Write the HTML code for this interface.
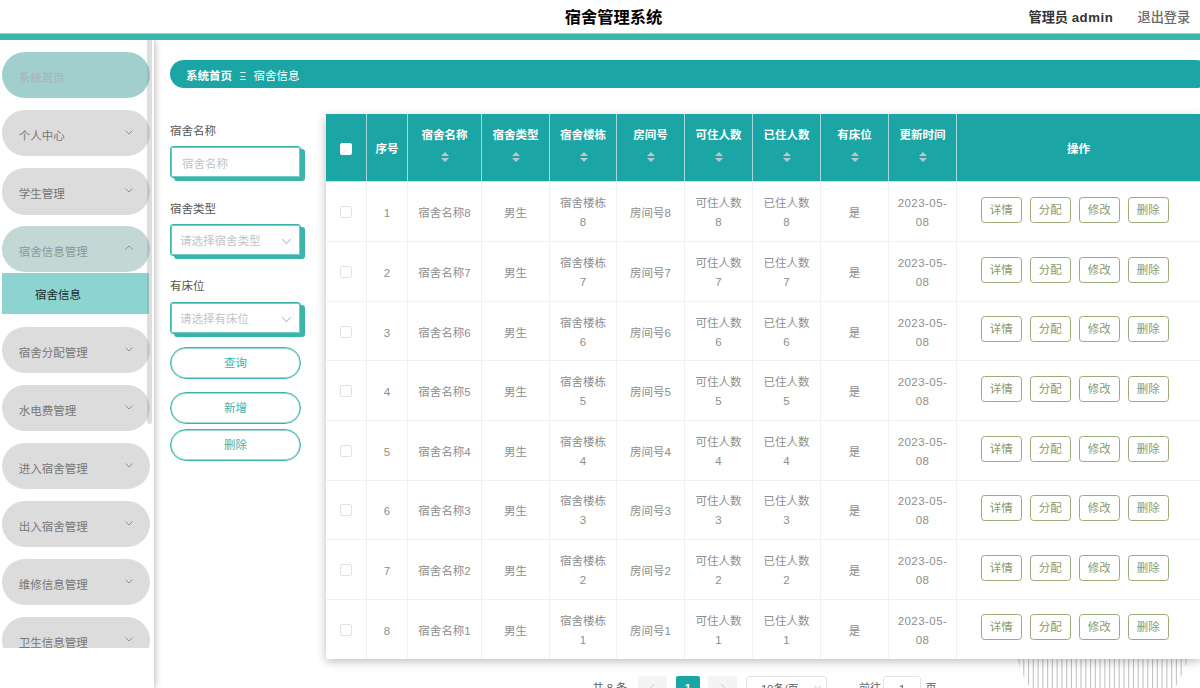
<!DOCTYPE html>
<html lang="zh-CN">
<head>
<meta charset="utf-8">
<title>宿舍管理系统</title>
<style>
*{box-sizing:border-box;margin:0;padding:0}
html,body{width:1200px;height:688px;overflow:hidden;background:#fff}
body{font-family:"Liberation Sans","Noto Sans CJK SC",sans-serif;font-size:12px;color:#606266;position:relative}
.abs{position:absolute}
/* header */
#hd{position:absolute;left:0;top:0;width:1200px;height:40px;background:#fff;border-bottom:6px solid #3bb4ac;z-index:30}
#hd:after{content:"";position:absolute;left:0;top:33px;width:1200px;height:1px;background:rgba(59,180,172,.55)}
#hd .title{position:absolute;left:0;width:1227px;top:0;height:34px;line-height:34px;text-align:center;font-size:16.3px;font-weight:bold;color:#000}
#hd .user{position:absolute;left:1028.5px;top:0;height:34px;line-height:35px;font-size:13.2px;font-weight:bold;color:#333;white-space:nowrap}
#hd .out{position:absolute;left:1137.5px;top:0;height:34px;line-height:35px;font-size:13.2px;color:#6a6a6a;font-weight:500;white-space:nowrap}
/* sidebar */
#sb{position:absolute;left:0;top:40px;width:154px;height:648px;background:#fff;box-shadow:1px 0 7px rgba(0,0,0,.28);z-index:20}
#sbwrap{position:absolute;left:0;top:0;width:154px;height:608px;overflow:hidden}
.mi{position:absolute;left:2px;width:147.7px;height:46.2px;border-radius:23.1px;background:#dcdcdc;color:#777;font-size:11.5px;line-height:53px;padding-left:16.7px;white-space:nowrap}
.mi svg{position:absolute;left:121.8px;top:16.8px;width:10px;height:10px}
.mi.home{background:#a0cfce;color:#b0b0b8;line-height:52px}
.mi.open{background:#c3d7d4;color:#8a9a98}
.sub{position:absolute;left:2.3px;top:233.4px;width:147px;height:40.3px;background:#8dd3cf;color:#1c2b2a;font-size:11.5px;line-height:44px;padding-left:32.8px}
#thumb{position:absolute;left:147px;top:0;width:5px;height:384px;border-radius:0 0 3px 3px;background:rgba(144,147,153,.3)}
/* main */
#bc{position:absolute;left:169.7px;top:60.2px;width:1040px;height:28.3px;border-radius:14.2px;background:#1ba6a5;color:#fff;font-size:11.5px;line-height:32px;padding-left:16.3px;white-space:pre}
#bc b{font-weight:bold}
#bc .sep{display:inline-block;width:21.6px;text-align:center;font-size:10px}
.lbl{position:absolute;left:170px;font-size:11.5px;color:#555;line-height:16px}
.inp{position:absolute;left:170px;width:131px;height:32px;border:1px solid #3bb4ac;border-radius:3px;background:#fff;box-shadow:inset 0 0 0 1px rgba(59,180,172,.7),4px 3px 0 #3bb4ac;color:#c0c4cc;font-size:11.5px;line-height:33px;padding-left:9px;white-space:nowrap}
.inp svg{position:absolute;left:110.2px;top:11.7px;width:11px;height:8.8px}
.btn{position:absolute;left:170px;width:131px;height:32px;border:1px solid #3bb4ac;box-shadow:inset 0 0 0 1px rgba(59,180,172,.5);border-radius:16px;background:#fff;color:#3bb4ac;font-size:11.5px;line-height:31px;text-align:center}

/* decorative striped circle */
#deco{position:absolute;left:1015px;top:551px;width:175px;height:175px;z-index:1}
/* table */
#tb{position:absolute;left:326px;top:114px;width:874px;height:545px;overflow:hidden;background:#fff;box-shadow:0 2.5px 9.5px rgba(0,0,0,.27);z-index:5}
.th-row{position:absolute;left:0;top:0;width:874px;height:67px;background:#1ba6a5}
.th-row:after{content:"";position:absolute;left:0;top:67px;width:874px;height:1px;background:rgba(27,166,165,.3)}
.th{position:absolute;top:0;height:67px;border-right:1px solid #a5d8da;color:#fff;font-weight:bold;font-size:11.5px;text-align:center}
.th:last-child{border-right:none}
.ht{position:absolute;left:0;right:0;top:12.2px;line-height:18px}
.ht.single{top:26px}
.caret{position:absolute;left:50%;top:38px;width:8px;height:10px;margin-left:-3.5px}
.caret i{position:absolute;left:0;width:0;height:0;border:4px solid transparent}
.caret .up{top:-4px;border-bottom-color:#c0c4cc}
.caret .dn{top:5.7px;border-top-color:#c0c4cc}
.ck{position:absolute;left:14px;top:50%;margin-top:-5px;width:12px;height:12px;border:1px solid #e0e2e9;border-radius:1.7px;background:#fff}
.hck{border-color:#fff;top:29px;margin-top:0}
.tr{position:absolute;left:0;width:874px;border-bottom:1px solid transparent}
.hl{position:absolute;left:0;width:874px;height:1px;background:#f0f1f3}
.td{position:absolute;top:0;height:100%;border-right:1px solid #f0f1f3;color:#8e8e8e;font-size:11.5px;text-align:center;display:flex;align-items:center;justify-content:center}
.td:last-child{border-right:none}
.ct{display:block;line-height:19.8px;position:relative;top:2.5px}
.ct.c2{line-height:19px;top:2.1px}
.ob{position:absolute;width:40.6px;height:26px;border:1px solid #9aab7c;border-radius:3.5px;color:#8b9a6c;font-size:11.5px;line-height:25px;text-align:center;background:#fff}
/* pager */
#pg{position:absolute;left:0;top:676px;width:1200px;height:24px;font-size:11.1px;color:#606266;z-index:6}
#pg span{position:absolute;top:0;height:24px;line-height:25.5px;text-align:center;white-space:nowrap}
#pg .pb{background:#f4f4f5;border-radius:2px;color:#c0c4cc}
#pg .cur{background:#1ba6a5;color:#fff;border-radius:2px;font-weight:bold}
#pg .box{border:1px solid #e1e3e9;border-radius:3px;background:#fff}
.dt{letter-spacing:.45px}
</style>
</head>
<body>
<div id="hd">
  <div class="title">宿舍管理系统</div>
  <div class="user">管理员 <span style="letter-spacing:.55px">admin</span></div>
  <div class="out">退出登录</div>
</div>

<div id="sb">
  <div id="sbwrap">
    <div class="mi home" style="top:12px">系统首页</div>
    <div class="mi" style="top:70.2px">个人中心<svg viewBox="0 0 10 10"><path d="M1.5 3.5 L5 7 L8.5 3.5" fill="none" stroke="#909399" stroke-width="1"/></svg></div>
    <div class="mi" style="top:128.4px">学生管理<svg viewBox="0 0 10 10"><path d="M1.5 3.5 L5 7 L8.5 3.5" fill="none" stroke="#909399" stroke-width="1"/></svg></div>
    <div class="mi open" style="top:186.3px">宿舍信息管理<svg viewBox="0 0 10 10"><path d="M1.5 6.5 L5 3 L8.5 6.5" fill="none" stroke="#909399" stroke-width="1"/></svg></div>
    <div class="sub">宿舍信息</div>
    <div class="mi" style="top:286.8px">宿舍分配管理<svg viewBox="0 0 10 10"><path d="M1.5 3.5 L5 7 L8.5 3.5" fill="none" stroke="#909399" stroke-width="1"/></svg></div>
    <div class="mi" style="top:344.9px">水电费管理<svg viewBox="0 0 10 10"><path d="M1.5 3.5 L5 7 L8.5 3.5" fill="none" stroke="#909399" stroke-width="1"/></svg></div>
    <div class="mi" style="top:403px">进入宿舍管理<svg viewBox="0 0 10 10"><path d="M1.5 3.5 L5 7 L8.5 3.5" fill="none" stroke="#909399" stroke-width="1"/></svg></div>
    <div class="mi" style="top:461.1px">出入宿舍管理<svg viewBox="0 0 10 10"><path d="M1.5 3.5 L5 7 L8.5 3.5" fill="none" stroke="#909399" stroke-width="1"/></svg></div>
    <div class="mi" style="top:519.2px">维修信息管理<svg viewBox="0 0 10 10"><path d="M1.5 3.5 L5 7 L8.5 3.5" fill="none" stroke="#909399" stroke-width="1"/></svg></div>
    <div class="mi" style="top:577.3px">卫生信息管理<svg viewBox="0 0 10 10"><path d="M1.5 3.5 L5 7 L8.5 3.5" fill="none" stroke="#909399" stroke-width="1"/></svg></div>
  </div>
  <div id="thumb"></div>
</div>

<div id="bc"><b>系统首页</b><span class="sep">Ξ</span>宿舍信息</div>

<div class="lbl" style="top:123px">宿舍名称</div>
<div class="inp" style="top:146px;padding-left:11px;line-height:34px">宿舍名称</div>
<div class="lbl" style="top:201px">宿舍类型</div>
<div class="inp" style="top:224px">请选择宿舍类型<svg viewBox="0 0 10 8"><path d="M1 2 L5 6 L9 2" fill="none" stroke="#c0c4cc" stroke-width="1"/></svg></div>
<div class="lbl" style="top:278px">有床位</div>
<div class="inp" style="top:302px">请选择有床位<svg viewBox="0 0 10 8"><path d="M1 2 L5 6 L9 2" fill="none" stroke="#c0c4cc" stroke-width="1"/></svg></div>
<div class="btn" style="top:347px">查询</div>
<div class="btn" style="top:392px">新增</div>
<div class="btn" style="top:428.5px">删除</div>

<!--TABLE-->
<div id="tb">
<div class="th-row">
<div class="th" style="left:0px;width:41px"><span class="ck hck"></span></div>
<div class="th" style="left:41px;width:41px"><span class="ht single">序号</span></div>
<div class="th" style="left:82px;width:74px"><span class="ht">宿舍名称</span><span class="caret"><i class="up"></i><i class="dn"></i></span></div>
<div class="th" style="left:156px;width:68px"><span class="ht">宿舍类型</span><span class="caret"><i class="up"></i><i class="dn"></i></span></div>
<div class="th" style="left:224px;width:67px"><span class="ht">宿舍楼栋</span><span class="caret"><i class="up"></i><i class="dn"></i></span></div>
<div class="th" style="left:291px;width:68px"><span class="ht">房间号</span><span class="caret"><i class="up"></i><i class="dn"></i></span></div>
<div class="th" style="left:359px;width:68px"><span class="ht">可住人数</span><span class="caret"><i class="up"></i><i class="dn"></i></span></div>
<div class="th" style="left:427px;width:68px"><span class="ht">已住人数</span><span class="caret"><i class="up"></i><i class="dn"></i></span></div>
<div class="th" style="left:495px;width:68px"><span class="ht">有床位</span><span class="caret"><i class="up"></i><i class="dn"></i></span></div>
<div class="th" style="left:563px;width:68px"><span class="ht">更新时间</span><span class="caret"><i class="up"></i><i class="dn"></i></span></div>
<div class="th" style="left:631px;width:243px"><span class="ht single">操作</span></div>
</div>
<div class="tr" style="top:67px;height:61px">
<div class="td" style="left:0px;width:41px"><span class="ck"></span></div>
<div class="td" style="left:41px;width:41px"><span class="ct">1</span></div>
<div class="td" style="left:82px;width:74px"><span class="ct">宿舍名称8</span></div>
<div class="td" style="left:156px;width:68px"><span class="ct">男生</span></div>
<div class="td" style="left:224px;width:67px"><span class="ct c2">宿舍楼栋<br>8</span></div>
<div class="td" style="left:291px;width:68px"><span class="ct">房间号8</span></div>
<div class="td" style="left:359px;width:68px"><span class="ct c2">可住人数<br>8</span></div>
<div class="td" style="left:427px;width:68px"><span class="ct c2">已住人数<br>8</span></div>
<div class="td" style="left:495px;width:68px"><span class="ct">是</span></div>
<div class="td" style="left:563px;width:68px"><span class="ct c2"><span class="dt">2023-05-<br>08</span></span></div>
<div class="td" style="left:631px;width:243px"><span class="ob" style="left:24px;top:16px">详情</span><span class="ob" style="left:73px;top:16px">分配</span><span class="ob" style="left:122px;top:16px">修改</span><span class="ob" style="left:171px;top:16px">删除</span></div>
</div>
<div class="tr" style="top:127px;height:61px">
<div class="td" style="left:0px;width:41px"><span class="ck"></span></div>
<div class="td" style="left:41px;width:41px"><span class="ct">2</span></div>
<div class="td" style="left:82px;width:74px"><span class="ct">宿舍名称7</span></div>
<div class="td" style="left:156px;width:68px"><span class="ct">男生</span></div>
<div class="td" style="left:224px;width:67px"><span class="ct c2">宿舍楼栋<br>7</span></div>
<div class="td" style="left:291px;width:68px"><span class="ct">房间号7</span></div>
<div class="td" style="left:359px;width:68px"><span class="ct c2">可住人数<br>7</span></div>
<div class="td" style="left:427px;width:68px"><span class="ct c2">已住人数<br>7</span></div>
<div class="td" style="left:495px;width:68px"><span class="ct">是</span></div>
<div class="td" style="left:563px;width:68px"><span class="ct c2"><span class="dt">2023-05-<br>08</span></span></div>
<div class="td" style="left:631px;width:243px"><span class="ob" style="left:24px;top:16px">详情</span><span class="ob" style="left:73px;top:16px">分配</span><span class="ob" style="left:122px;top:16px">修改</span><span class="ob" style="left:171px;top:16px">删除</span></div>
</div>
<div class="tr" style="top:187px;height:61px">
<div class="td" style="left:0px;width:41px"><span class="ck"></span></div>
<div class="td" style="left:41px;width:41px"><span class="ct">3</span></div>
<div class="td" style="left:82px;width:74px"><span class="ct">宿舍名称6</span></div>
<div class="td" style="left:156px;width:68px"><span class="ct">男生</span></div>
<div class="td" style="left:224px;width:67px"><span class="ct c2">宿舍楼栋<br>6</span></div>
<div class="td" style="left:291px;width:68px"><span class="ct">房间号6</span></div>
<div class="td" style="left:359px;width:68px"><span class="ct c2">可住人数<br>6</span></div>
<div class="td" style="left:427px;width:68px"><span class="ct c2">已住人数<br>6</span></div>
<div class="td" style="left:495px;width:68px"><span class="ct">是</span></div>
<div class="td" style="left:563px;width:68px"><span class="ct c2"><span class="dt">2023-05-<br>08</span></span></div>
<div class="td" style="left:631px;width:243px"><span class="ob" style="left:24px;top:15px">详情</span><span class="ob" style="left:73px;top:15px">分配</span><span class="ob" style="left:122px;top:15px">修改</span><span class="ob" style="left:171px;top:15px">删除</span></div>
</div>
<div class="tr" style="top:246px;height:61px">
<div class="td" style="left:0px;width:41px"><span class="ck"></span></div>
<div class="td" style="left:41px;width:41px"><span class="ct">4</span></div>
<div class="td" style="left:82px;width:74px"><span class="ct">宿舍名称5</span></div>
<div class="td" style="left:156px;width:68px"><span class="ct">男生</span></div>
<div class="td" style="left:224px;width:67px"><span class="ct c2">宿舍楼栋<br>5</span></div>
<div class="td" style="left:291px;width:68px"><span class="ct">房间号5</span></div>
<div class="td" style="left:359px;width:68px"><span class="ct c2">可住人数<br>5</span></div>
<div class="td" style="left:427px;width:68px"><span class="ct c2">已住人数<br>5</span></div>
<div class="td" style="left:495px;width:68px"><span class="ct">是</span></div>
<div class="td" style="left:563px;width:68px"><span class="ct c2"><span class="dt">2023-05-<br>08</span></span></div>
<div class="td" style="left:631px;width:243px"><span class="ob" style="left:24px;top:16px">详情</span><span class="ob" style="left:73px;top:16px">分配</span><span class="ob" style="left:122px;top:16px">修改</span><span class="ob" style="left:171px;top:16px">删除</span></div>
</div>
<div class="tr" style="top:306px;height:61px">
<div class="td" style="left:0px;width:41px"><span class="ck"></span></div>
<div class="td" style="left:41px;width:41px"><span class="ct">5</span></div>
<div class="td" style="left:82px;width:74px"><span class="ct">宿舍名称4</span></div>
<div class="td" style="left:156px;width:68px"><span class="ct">男生</span></div>
<div class="td" style="left:224px;width:67px"><span class="ct c2">宿舍楼栋<br>4</span></div>
<div class="td" style="left:291px;width:68px"><span class="ct">房间号4</span></div>
<div class="td" style="left:359px;width:68px"><span class="ct c2">可住人数<br>4</span></div>
<div class="td" style="left:427px;width:68px"><span class="ct c2">已住人数<br>4</span></div>
<div class="td" style="left:495px;width:68px"><span class="ct">是</span></div>
<div class="td" style="left:563px;width:68px"><span class="ct c2"><span class="dt">2023-05-<br>08</span></span></div>
<div class="td" style="left:631px;width:243px"><span class="ob" style="left:24px;top:16px">详情</span><span class="ob" style="left:73px;top:16px">分配</span><span class="ob" style="left:122px;top:16px">修改</span><span class="ob" style="left:171px;top:16px">删除</span></div>
</div>
<div class="tr" style="top:365px;height:61px">
<div class="td" style="left:0px;width:41px"><span class="ck"></span></div>
<div class="td" style="left:41px;width:41px"><span class="ct">6</span></div>
<div class="td" style="left:82px;width:74px"><span class="ct">宿舍名称3</span></div>
<div class="td" style="left:156px;width:68px"><span class="ct">男生</span></div>
<div class="td" style="left:224px;width:67px"><span class="ct c2">宿舍楼栋<br>3</span></div>
<div class="td" style="left:291px;width:68px"><span class="ct">房间号3</span></div>
<div class="td" style="left:359px;width:68px"><span class="ct c2">可住人数<br>3</span></div>
<div class="td" style="left:427px;width:68px"><span class="ct c2">已住人数<br>3</span></div>
<div class="td" style="left:495px;width:68px"><span class="ct">是</span></div>
<div class="td" style="left:563px;width:68px"><span class="ct c2"><span class="dt">2023-05-<br>08</span></span></div>
<div class="td" style="left:631px;width:243px"><span class="ob" style="left:24px;top:16px">详情</span><span class="ob" style="left:73px;top:16px">分配</span><span class="ob" style="left:122px;top:16px">修改</span><span class="ob" style="left:171px;top:16px">删除</span></div>
</div>
<div class="tr" style="top:425px;height:61px">
<div class="td" style="left:0px;width:41px"><span class="ck"></span></div>
<div class="td" style="left:41px;width:41px"><span class="ct">7</span></div>
<div class="td" style="left:82px;width:74px"><span class="ct">宿舍名称2</span></div>
<div class="td" style="left:156px;width:68px"><span class="ct">男生</span></div>
<div class="td" style="left:224px;width:67px"><span class="ct c2">宿舍楼栋<br>2</span></div>
<div class="td" style="left:291px;width:68px"><span class="ct">房间号2</span></div>
<div class="td" style="left:359px;width:68px"><span class="ct c2">可住人数<br>2</span></div>
<div class="td" style="left:427px;width:68px"><span class="ct c2">已住人数<br>2</span></div>
<div class="td" style="left:495px;width:68px"><span class="ct">是</span></div>
<div class="td" style="left:563px;width:68px"><span class="ct c2"><span class="dt">2023-05-<br>08</span></span></div>
<div class="td" style="left:631px;width:243px"><span class="ob" style="left:24px;top:16px">详情</span><span class="ob" style="left:73px;top:16px">分配</span><span class="ob" style="left:122px;top:16px">修改</span><span class="ob" style="left:171px;top:16px">删除</span></div>
</div>
<div class="tr" style="top:485px;height:61px">
<div class="td" style="left:0px;width:41px"><span class="ck"></span></div>
<div class="td" style="left:41px;width:41px"><span class="ct">8</span></div>
<div class="td" style="left:82px;width:74px"><span class="ct">宿舍名称1</span></div>
<div class="td" style="left:156px;width:68px"><span class="ct">男生</span></div>
<div class="td" style="left:224px;width:67px"><span class="ct c2">宿舍楼栋<br>1</span></div>
<div class="td" style="left:291px;width:68px"><span class="ct">房间号1</span></div>
<div class="td" style="left:359px;width:68px"><span class="ct c2">可住人数<br>1</span></div>
<div class="td" style="left:427px;width:68px"><span class="ct c2">已住人数<br>1</span></div>
<div class="td" style="left:495px;width:68px"><span class="ct">是</span></div>
<div class="td" style="left:563px;width:68px"><span class="ct c2"><span class="dt">2023-05-<br>08</span></span></div>
<div class="td" style="left:631px;width:243px"><span class="ob" style="left:24px;top:15px">详情</span><span class="ob" style="left:73px;top:15px">分配</span><span class="ob" style="left:122px;top:15px">修改</span><span class="ob" style="left:171px;top:15px">删除</span></div>
</div>
<div class="hl" style="top:127px"></div>
<div class="hl" style="top:187px"></div>
<div class="hl" style="top:246px"></div>
<div class="hl" style="top:306px"></div>
<div class="hl" style="top:366px"></div>
<div class="hl" style="top:425px"></div>
<div class="hl" style="top:485px"></div>
</div>
<!--/TABLE-->
<svg id="deco" viewBox="0 0 175 175"><defs><clipPath id="dc"><circle cx="87.5" cy="87.5" r="87.5"/></clipPath></defs><g clip-path="url(#dc)" stroke="#c4c4c4" stroke-width="1.1"><line x1="4.00" y1="0" x2="4.00" y2="175"/><line x1="8.77" y1="0" x2="8.77" y2="175"/><line x1="13.54" y1="0" x2="13.54" y2="175"/><line x1="18.31" y1="0" x2="18.31" y2="175"/><line x1="23.08" y1="0" x2="23.08" y2="175"/><line x1="27.85" y1="0" x2="27.85" y2="175"/><line x1="32.62" y1="0" x2="32.62" y2="175"/><line x1="37.39" y1="0" x2="37.39" y2="175"/><line x1="42.16" y1="0" x2="42.16" y2="175"/><line x1="46.93" y1="0" x2="46.93" y2="175"/><line x1="51.70" y1="0" x2="51.70" y2="175"/><line x1="56.47" y1="0" x2="56.47" y2="175"/><line x1="61.24" y1="0" x2="61.24" y2="175"/><line x1="66.01" y1="0" x2="66.01" y2="175"/><line x1="70.78" y1="0" x2="70.78" y2="175"/><line x1="75.55" y1="0" x2="75.55" y2="175"/><line x1="80.32" y1="0" x2="80.32" y2="175"/><line x1="85.09" y1="0" x2="85.09" y2="175"/><line x1="89.86" y1="0" x2="89.86" y2="175"/><line x1="94.63" y1="0" x2="94.63" y2="175"/><line x1="99.40" y1="0" x2="99.40" y2="175"/><line x1="104.17" y1="0" x2="104.17" y2="175"/><line x1="108.94" y1="0" x2="108.94" y2="175"/><line x1="113.71" y1="0" x2="113.71" y2="175"/><line x1="118.48" y1="0" x2="118.48" y2="175"/><line x1="123.25" y1="0" x2="123.25" y2="175"/><line x1="128.02" y1="0" x2="128.02" y2="175"/><line x1="132.79" y1="0" x2="132.79" y2="175"/><line x1="137.56" y1="0" x2="137.56" y2="175"/><line x1="142.33" y1="0" x2="142.33" y2="175"/><line x1="147.10" y1="0" x2="147.10" y2="175"/><line x1="151.87" y1="0" x2="151.87" y2="175"/><line x1="156.64" y1="0" x2="156.64" y2="175"/><line x1="161.41" y1="0" x2="161.41" y2="175"/><line x1="166.18" y1="0" x2="166.18" y2="175"/><line x1="170.95" y1="0" x2="170.95" y2="175"/></g></svg>
<div id="pg">
  <span style="left:592.5px;width:34px">共 8 条</span>
  <span class="pb" style="left:638.3px;width:28.6px"><svg viewBox="0 0 10 10" style="width:9px;height:9px"><path d="M6.5 1.5 L3 5 L6.5 8.5" fill="none" stroke="#c0c4cc" stroke-width="1.1"/></svg></span>
  <span class="cur" style="left:675.7px;width:24.3px">1</span>
  <span class="pb" style="left:708.1px;width:28.6px"><svg viewBox="0 0 10 10" style="width:9px;height:9px"><path d="M3.5 1.5 L7 5 L3.5 8.5" fill="none" stroke="#c0c4cc" stroke-width="1.1"/></svg></span>
  <span class="box" style="left:745.5px;width:81.4px;padding-right:13px">10条/页<svg viewBox="0 0 10 10" style="position:absolute;left:66.3px;top:5.6px;width:9px;height:9px"><path d="M1.5 3.2 L5 6.8 L8.5 3.2" fill="none" stroke="#c0c4cc" stroke-width="1.1"/></svg></span>
  <span style="left:859px;width:22px">前往</span>
  <span class="box" style="left:883.3px;width:37.4px">1</span>
  <span style="left:925px;width:12px">页</span>
</div>
</body>
</html>
